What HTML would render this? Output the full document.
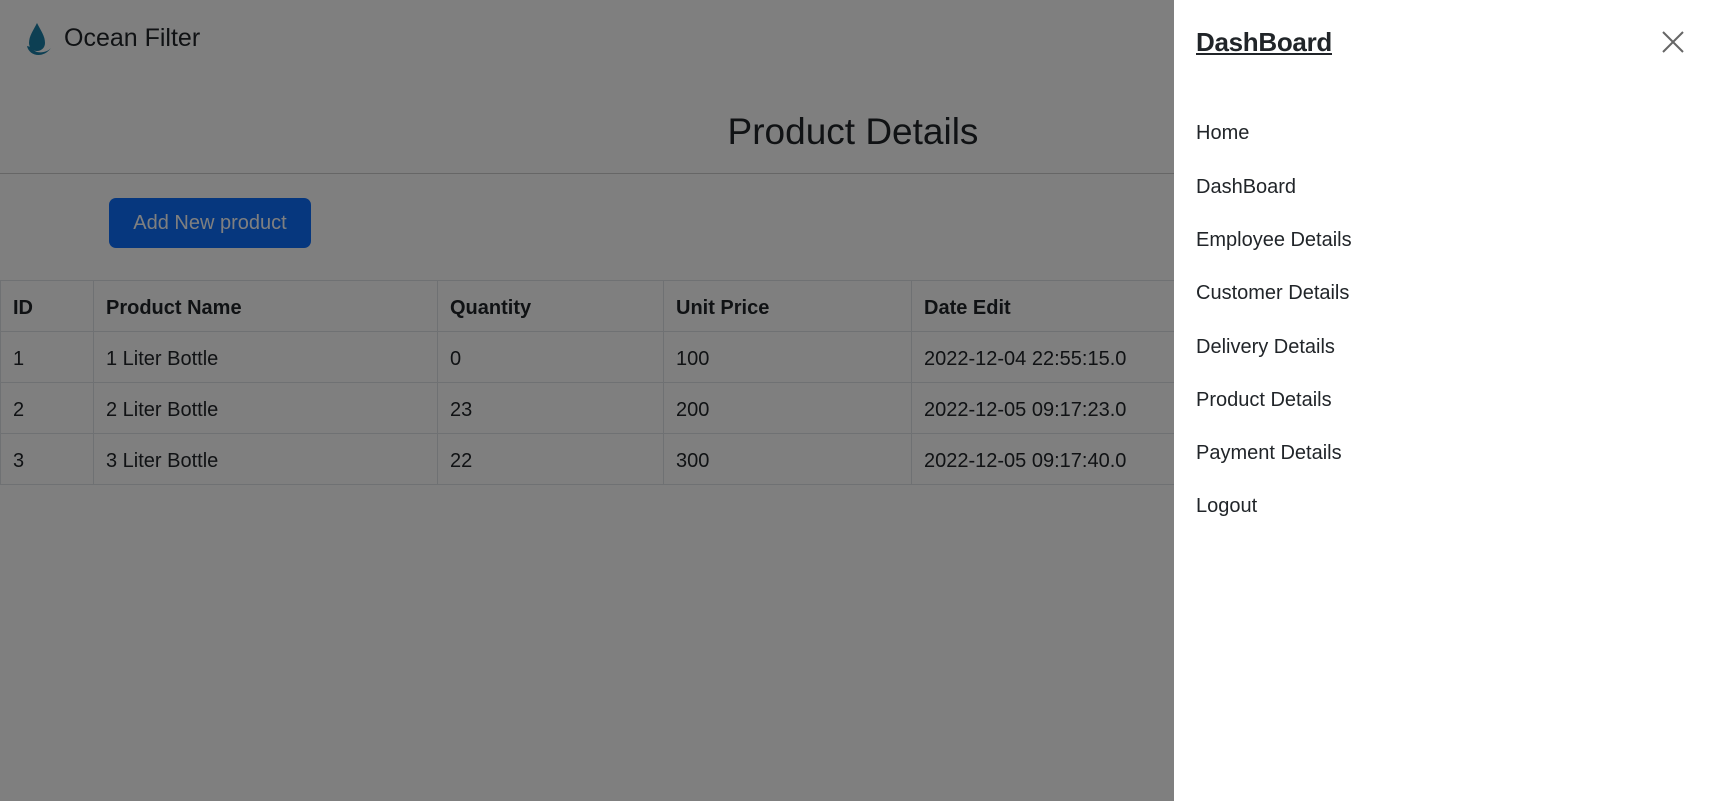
<!DOCTYPE html>
<html><head><meta charset="utf-8"><style>
*{box-sizing:border-box;margin:0;padding:0}
body{width:1722px;height:801px;overflow:hidden;background:#fff;font-family:"Liberation Sans",sans-serif;color:#212529;position:relative}
.logo{position:absolute;left:25px;top:22px}
.brand{position:absolute;left:64px;top:22px;font-size:25px;line-height:32px}
h1{position:absolute;left:0;width:1706px;text-align:center;top:110px;font-size:37px;font-weight:500;line-height:44px}
.hr{position:absolute;left:0;right:0;top:173px;border-top:1px solid #ccc}
.btn{position:absolute;left:109px;top:198px;width:202px;height:50px;background:#0d6efd;color:#fff;border-radius:7px;font-size:20px;line-height:50px;text-align:center}
table{position:absolute;left:0;top:280px;border-collapse:collapse;font-size:20px}
td,th{border:1px solid #dee2e6;height:51px;padding:4px 12px 0;text-align:left;white-space:nowrap}
th{font-weight:bold}
.ov{position:absolute;inset:0;background:rgba(0,0,0,.5)}
.side{position:absolute;left:1174px;top:0;width:548px;height:801px;background:#fff}
.side .t{position:absolute;left:22px;top:26px;font-size:26px;font-weight:bold;text-decoration:underline;line-height:32px;color:#212529;letter-spacing:-0.3px}
.side .x{position:absolute;left:488px;top:31px}
.side a{position:absolute;left:22px;font-size:20px;color:#212529;text-decoration:none;line-height:24px}
</style></head><body>
<svg class="logo" width="28" height="36" viewBox="0 0 28 36"><path d="M12 1 C8 9 4 14 4 21 C4 26 8 29 12 29 C16 29 20 26 20 21 C20 14 16 9 12 1Z" fill="#1b7fa6"/><path d="M2 24 C4 34 18 37 26 26 C22 31 10 33 6 25Z" fill="#1b7fa6"/></svg>
<div class="brand">Ocean Filter</div>
<h1>Product Details</h1>
<div class="hr"></div>
<div class="btn">Add New product</div>
<table>
<tr><th style="width:93px">ID</th><th style="width:344px">Product Name</th><th style="width:226px">Quantity</th><th style="width:248px">Unit Price</th><th style="width:400px">Date Edit</th></tr>
<tr><td>1</td><td>1 Liter Bottle</td><td>0</td><td>100</td><td>2022-12-04 22:55:15.0</td></tr>
<tr><td>2</td><td>2 Liter Bottle</td><td>23</td><td>200</td><td>2022-12-05 09:17:23.0</td></tr>
<tr><td>3</td><td>3 Liter Bottle</td><td>22</td><td>300</td><td>2022-12-05 09:17:40.0</td></tr>
</table>
<div class="ov"></div>
<div class="side">
<div class="t">DashBoard</div>
<svg class="x" width="22" height="22" viewBox="0 0 22 22"><path d="M1 1L21 21M21 1L1 21" stroke="#666" stroke-width="2"/></svg>
<a style="top:121px">Home</a>
<a style="top:175px">DashBoard</a>
<a style="top:228px">Employee Details</a>
<a style="top:281px">Customer Details</a>
<a style="top:335px">Delivery Details</a>
<a style="top:388px">Product Details</a>
<a style="top:441px">Payment Details</a>
<a style="top:494px">Logout</a>
</div>
</body></html>
